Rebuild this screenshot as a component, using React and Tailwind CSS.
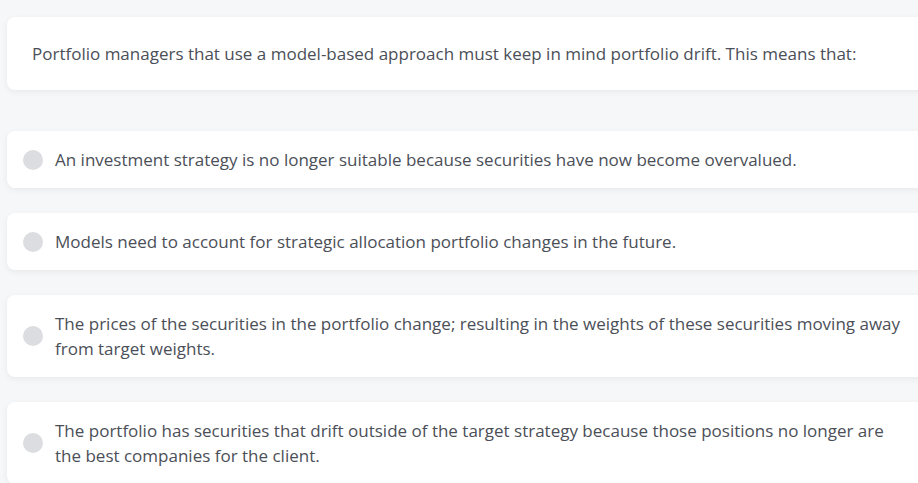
const options = [
  "An investment strategy is no longer suitable because securities have now become overvalued.",
  "Models need to account for strategic allocation portfolio changes in the future.",
  "The prices of the securities in the portfolio change; resulting in the weights of these securities moving away from target weights.",
  "The portfolio has securities that drift outside of the target strategy because those positions no longer are the best companies for the client.",
];

export default function App() {
  return (
    <div
      className="w-[918px] h-[483px] overflow-hidden bg-[#f6f7f9] text-[#4b4f58] text-[17px] leading-6"
      style={{ fontFamily: '"Open Sans", sans-serif' }}
    >
      <div className="pt-[17px] pl-[7px] w-[935px]">
        <div className="bg-white rounded-lg shadow-[0_2px_6px_rgba(0,0,0,0.06)] h-[73px] flex items-center pl-[25px] pr-4">
          <p>Portfolio managers that use a model-based approach must keep in mind portfolio drift. This means that:</p>
        </div>
        <div className="mt-[41px] flex flex-col gap-[25px]">
          {options.map((text) => (
            <div
              key={text}
              className="bg-white rounded-lg shadow-[0_2px_6px_rgba(0,0,0,0.06)] flex items-center gap-3 pl-4 pr-[34px] py-4 leading-[25px] min-h-[57px]"
            >
              <span className="w-5 h-5 shrink-0 rounded-full bg-[#dcdde0]" />
              <p>{text}</p>
            </div>
          ))}
        </div>
      </div>
    </div>
  );
}
